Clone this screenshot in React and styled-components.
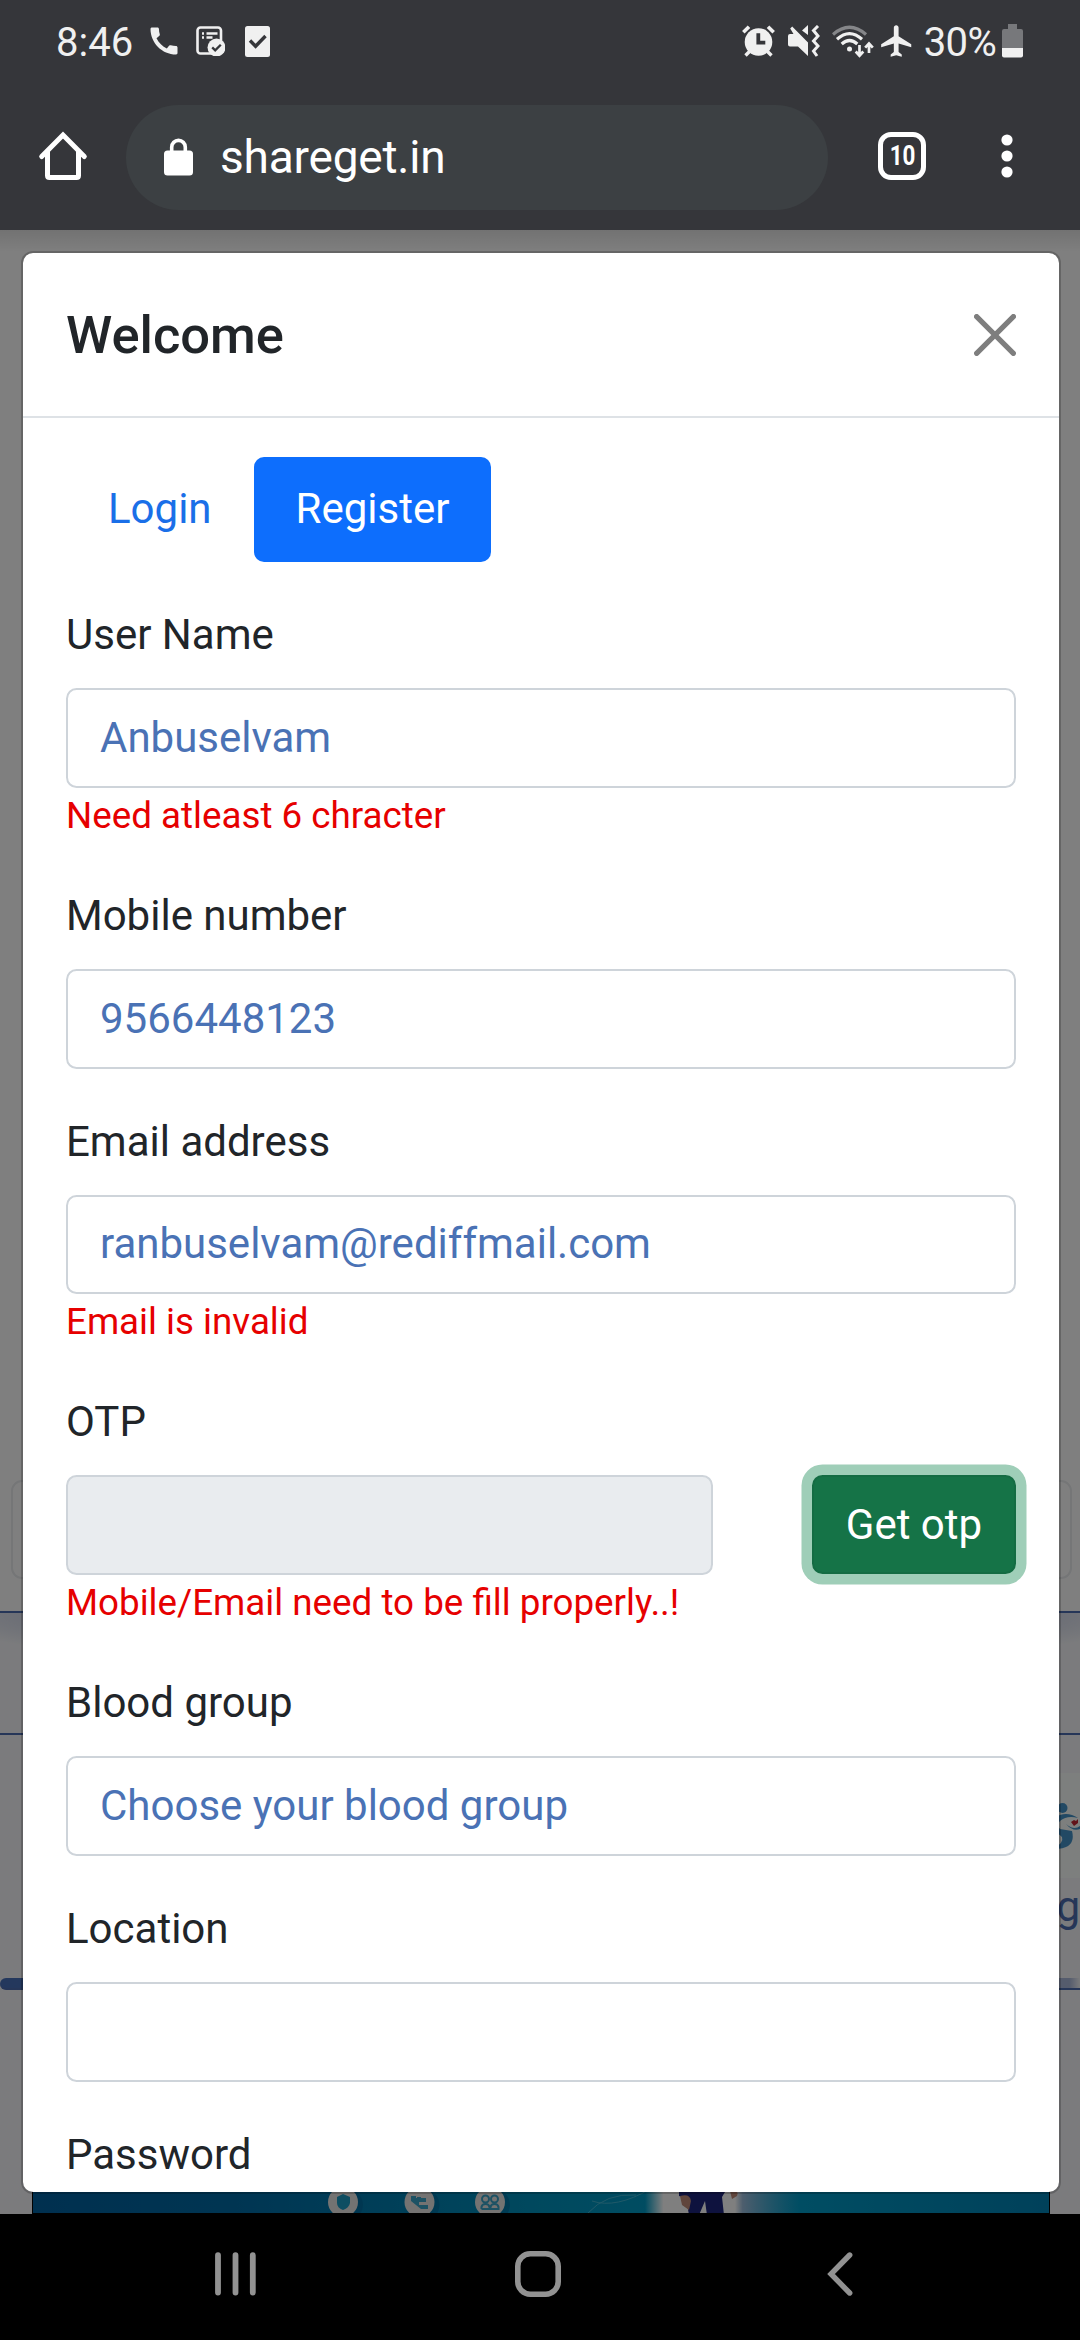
import React from "react";
import styled, { createGlobalStyle } from "styled-components";
import { MdCall, MdFlight } from "react-icons/md";

const GlobalStyle = createGlobalStyle`
  *, *::before, *::after { box-sizing: border-box; }
  html, body { margin: 0; padding: 0; background: #000; }
  body { font-family: Roboto, "Liberation Sans", sans-serif; line-height: 1.5; }
  svg { display: block; flex: none; }
`;

const Screen = styled.div`
  width: 1080px;
  height: 2340px;
  display: flex;
  flex-direction: column;
  overflow: hidden;
`;

/* Browser chrome */
const StatusBar = styled.header`
  height: 82px;
  flex: none;
  display: flex;
  align-items: center;
  justify-content: space-between;
  padding: 0 57px 0 56px;
  background: #35363a;
  color: #f0f0f0;
`;
const StatusGroup = styled.div`
  display: flex;
  align-items: center;
`;
const StatusText = styled.span`
  font-size: 40px;
  line-height: 82px;
  letter-spacing: ${(p) => p.$spacing || 0};
  padding-top: 3px;
`;
const Slot = styled.span`
  display: flex;
  margin-left: ${(p) => p.$left}px;
`;

const Toolbar = styled.div`
  height: 148px;
  flex: none;
  display: flex;
  align-items: center;
  padding: 0 67px 0 38px;
  background: #35363a;
  color: #fff;
`;
const ToolbarSpace = styled.div`
  flex: 1;
`;
const AddressPill = styled.div`
  width: 702px;
  height: 105px;
  margin: 2px 0 0 38px;
  padding-left: 38px;
  display: flex;
  align-items: center;
  border-radius: 53px;
  background: #3c4043;
`;
const Address = styled.span`
  margin-left: 27px;
  font-size: 46px;
  line-height: 60px;
  letter-spacing: -0.2px;
`;
const TabCount = styled.div`
  width: 48px;
  height: 48px;
  margin-left: 50px;
  border: 5px solid #fff;
  border-radius: 13px;
  display: flex;
  align-items: center;
  justify-content: center;
  padding-top: 1px;
  font-size: 27px;
  font-weight: 700;
  line-height: 1;
  span { transform: scaleX(0.83); }
`;

/* Web page under the dialog */
const Viewport = styled.main`
  position: relative;
  height: 1984px;
  flex: none;
  overflow: hidden;
  background: #fff;
`;
const Page = styled.div`
  height: 100%;
  display: flex;
  flex-direction: column;
  padding-top: 1250px;
`;
const SearchBox = styled.div`
  height: 99px;
  flex: none;
  margin: 0 8px 0 11px;
  border: 2px solid #eaecef;
  border-radius: 11px;
`;
const Section = styled.section`
  flex: 1;
  margin-top: 32px;
  background: #f6f7fa;
`;
const Strip = styled.div`
  height: 124px;
  border-top: 2px solid #4d6cb0;
  border-bottom: 2px solid #4d6cb0;
  background: radial-gradient(ellipse 620px 58px at 50% 0, #a9b6da 0%, #c2cae2 70%, rgba(246, 247, 250, 0) 100%);
`;
const Cards = styled.div`
  height: 255px;
  display: flex;
  flex-direction: column;
  align-items: flex-end;
  padding-top: 38px;
`;
const CardPicture = styled.div`
  width: 120px;
  height: 105px;
  display: flex;
  align-items: center;
  justify-content: flex-end;
  background: #fafffc;
`;
const CardName = styled.div`
  height: 100px;
  padding-top: 0;
  color: #4d6cb0;
  font-size: 42px;
  line-height: 58px;
`;
const Scroller = styled.div`
  width: 100%;
  height: 12px;
  border-bottom: 2px solid #4d6cb0;
  border-radius: 6px 0 0 6px;
  background: linear-gradient(90deg, #4970bb 0 50%, #aab8da 50% 99%, #f6f7fa);
`;
const Banner = styled.div`
  height: 170px;
  margin: 54px 30px 0 32px;
  border: 1px solid #000;
  display: flex;
  align-items: flex-start;
  background: linear-gradient(90deg, #00609f 0, #006ba5 20%, #0092bd 50%, #00a0ca 70%, #0082b5 100%);
`;
const Backdrop = styled.div`
  position: absolute;
  inset: 0;
  background: linear-gradient(rgba(0, 0, 0, 0.1), transparent 22px), rgba(0, 0, 0, 0.5);
  display: flex;
  padding: 21px 19px 20px 21px;
`;

/* Dialog */
const Dialog = styled.section`
  flex: 1;
  min-width: 0;
  border: 2px solid rgba(0, 0, 0, 0.2);
  border-radius: 12px;
  background: #fff;
  background-clip: padding-box;
  overflow: hidden;
  display: flex;
  flex-direction: column;
`;
const DialogHeader = styled.div`
  height: 165px;
  flex: none;
  display: flex;
  align-items: center;
  justify-content: space-between;
  padding: 0 43px 0 43px;
  border-bottom: 2px solid #dee2e6;
`;
const Title = styled.h5`
  margin: 0;
  padding-top: 1px;
  font-size: 52.5px;
  font-weight: 500;
  color: #212529;
`;
const DialogBody = styled.div`
  padding: 39px 43px 0 43px;
`;
const Tabs = styled.div`
  display: flex;
  margin-bottom: 42px;
`;
const Tab = styled.button`
  height: 105px;
  padding: 0 42px 2px;
  border: 0;
  border-radius: 10px;
  background: ${(p) => (p.$active ? "#0d6efd" : "transparent")};
  color: ${(p) => (p.$active ? "#fff" : "#1a6fe8")};
  font: 400 42px/63px Roboto, sans-serif;
`;
const Field = styled.div`
  margin-bottom: 42px;
`;
const Label = styled.label`
  display: block;
  height: 63px;
  margin-bottom: 21px;
  font-size: 42px;
  line-height: 61px;
  color: #212529;
`;
const Row = styled.div`
  display: flex;
  justify-content: space-between;
`;
const Control = styled.input`
  display: block;
  width: ${(p) => p.$width || "100%"};
  height: 99.75px;
  padding: 0 32px 1px;
  border: 2px solid #ced4da;
  border-radius: 10.5px;
  outline: 0;
  background: ${(p) => (p.disabled ? "#e9ecef" : "#fff")};
  color: #4a72b5;
  font: 400 42px/63px Roboto, sans-serif;
`;
const ErrorText = styled.div`
  height: 55.1px;
  font-size: 36.75px;
  line-height: 55.1px;
  color: #e60000;
`;
const OtpButton = styled.button`
  width: 204px;
  height: 99px;
  padding: 0;
  border: 2px solid #146c43;
  border-radius: 10.5px;
  background: #157347;
  box-shadow: 0 0 0 10.5px #9fceb8;
  color: #fff;
  font: 400 42px/63px Roboto, sans-serif;
`;

const NavBar = styled.nav`
  height: 126px;
  flex: none;
  display: flex;
  align-items: center;
  padding: 0 0 6px 215px;
  background: #000;
`;

const NoteIcon = () => (
  <svg width="29" height="30" viewBox="0 0 29 30">
    <rect x="1.5" y="1.5" width="23.5" height="26" rx="3" fill="none" stroke="currentColor" strokeWidth="2.6" />
    <path d="M6 7.5h2M10.5 7.5h11M6 11.5h2M10.5 11.5h6" stroke="currentColor" strokeWidth="2.4" />
    <circle cx="20.5" cy="21.5" r="9" fill="#f0f0f0" />
    <path d="M16.2 21.4l3 3 5.6-5.6" fill="none" stroke="#35363a" strokeWidth="2.3" />
  </svg>
);
const CheckIcon = () => (
  <svg width="25" height="31" viewBox="0 0 25 31">
    <rect width="25" height="31" rx="2.5" fill="currentColor" />
    <path d="M5 14.5l5.6 5.7L20.5 10" fill="none" stroke="#35363a" strokeWidth="3.4" />
  </svg>
);
const AlarmIcon = () => (
  <svg width="33" height="32" viewBox="0 0 33 32">
    <circle cx="16.5" cy="17" r="13.8" fill="currentColor" />
    <path d="M1.3 7.3L7 1.7M31.700 7.300L26 1.700" stroke="currentColor" strokeWidth="3.6" />
    <path d="M7.500 26.500L3.500 30.500M25.500 26.500L29.500 30.500" stroke="currentColor" strokeWidth="3.400" />
    <path d="M16.300 8.300V17.700H23.300" fill="none" stroke="#35363a" strokeWidth="3.800" />
  </svg>
);
const MuteIcon = () => (
  <svg width="32" height="32" viewBox="0 0 32 32" fill="currentColor">
    <path d="M0 11Q0 9 2 9H5.500L2.200 3.500L4.200 1.600L20 17.500V31L10 21.500H2Q0 21.500 0 19.500Z" />
    <path d="M20 0V10L14 5.500Z" />
    <path d="M30 1L25.500 5.500L30 11L25.500 16L30 21L25.500 26L29 31" fill="none" stroke="currentColor" strokeWidth="3" />
  </svg>
);
const WifiIcon = () => (
  <svg width="42" height="33" viewBox="0 0 42 33" fill="none" stroke="currentColor" strokeWidth="3.200">
    <path d="M1 9.500Q17.500-5 34 9.500" stroke="#858689" />
    <path d="M5 14.200Q17.500 3 30 14.200" />
    <path d="M9.700 19Q17.500 12 25.300 19" />
    <circle cx="17.500" cy="24" r="2.500" fill="currentColor" stroke="none" />
    <path d="M27.500 20V30M23.700 26.500L27.500 30.700L31.300 26.500M37 28V20M33.200 22.700L37 18.500L40.800 22.700" strokeWidth="2.700" />
  </svg>
);
const BatteryIcon = () => (
  <svg width="21" height="34" viewBox="0 0 21 34">
    <path d="M6 0H15V5H19Q21 5 21 7V25H0V7Q0 5 2 5H6Z" fill="#77787b" />
    <path d="M0 24H21V31.500Q21 33.500 19 33.500H2Q0 33.500 0 31.500Z" fill="#f0f0f0" />
  </svg>
);
const HomeIcon = () => (
  <svg width="50" height="50" viewBox="0 0 50 50" fill="none" stroke="#fff" strokeWidth="5" strokeLinecap="round">
    <path d="M3.700 25.500L25 4L46.300 25.500" strokeLinejoin="miter" />
    <path d="M9.500 20.500V44.500Q9.500 46.500 11.500 46.500H38.500Q40.500 46.500 40.500 44.500V20.500" />
  </svg>
);
const LockIcon = () => (
  <svg width="29" height="38" viewBox="0 0 29 38">
    <path d="M7.700 16V9.200a6.800 6.800 0 0 1 13.600 0V16" fill="none" stroke="#fff" strokeWidth="3.600" />
    <rect y="12.500" width="29" height="25" rx="3.500" fill="#fff" />
  </svg>
);
const MenuIcon = () => (
  <svg width="12" height="44" viewBox="0 0 12 44" fill="#fff">
    <circle cx="6" cy="6" r="5.600" />
    <circle cx="6" cy="22" r="5.600" />
    <circle cx="6" cy="38" r="5.600" />
  </svg>
);
const CloseIcon = () => (
  <svg width="42" height="42" viewBox="0 0 16 16" fill="#000" opacity="0.5">
    <path d="M.293.293a1 1 0 0 1 1.414 0L8 6.586 14.293.293a1 1 0 1 1 1.414 1.414L9.414 8l6.293 6.293a1 1 0 0 1-1.414 1.414L8 9.414l-6.293 6.293a1 1 0 0 1-1.414-1.414L6.586 8 .293 1.707a1 1 0 0 1 0-1.414z" />
  </svg>
);
const CareLogo = () => (
  <svg width="26" height="50" viewBox="0 0 26 50" fill="#4592c8">
    <circle cx="8.500" cy="7" r="5" />
    <path d="M0 17Q12 9 24 17Q13 14 6 20Q2 24 6 28L18 30Q21 42 12 46Q6 49 0 47Q10 42 8 36L0 29Z" />
    <path d="M12 23Q20 30 26 25V28Q19 31 12 23Z" />
    <path d="M20 25L17 21L20 19L22 20L24 18L24 22Z" fill="#c22735" />
  </svg>
);
const BannerArt = () => (
  <svg width="1016" height="168" viewBox="33 -148 1016 168">
    <defs>
      <linearGradient id="door">
        <stop offset="0" stopColor="#fff" stopOpacity="0" />
        <stop offset="0.120" stopColor="#fff" />
        <stop offset="0.580" stopColor="#fff" />
        <stop offset="0.630" stopColor="#9bbcdb" />
        <stop offset="1" stopColor="#6dacd2" stopOpacity="0" />
      </linearGradient>
    </defs>
    <path d="M588 20Q606 0 636 2M592 8Q616 16 650-4" fill="none" stroke="#40b3d2" strokeWidth="1" />
    <rect x="645" y="-30" width="155" height="52" fill="url(#door)" />
    <path d="M679-6H728L722 4L724 22H707L705 8L699 22H689L686 5L679 3Z" fill="#1c257c" />
    <path d="M680 3Q690 0 691 8L689 17L682 12ZM730-2Q740-3 737 3L732 6Z" fill="#c08a78" />
    {[343, 419.500, 490].map((cx) => (
      <React.Fragment key={cx}>
        <circle cx={cx + 4} cy="12" r="16" fill="#006397" opacity="0.500" />
        <circle cx={cx} cy="9" r="15" fill="#e8e6e4" />
      </React.Fragment>
    ))}
    <path d="M343 1L350 4V10Q349 15 343 17Q337 15 337 10V4Z" fill="#1c9cc4" />
    <path d="M411 3H416V5H426V9H419V12H428V16H421L411 8ZM417 4H421V7H417Z" fill="#3aa4c8" />
    <g fill="none" stroke="#3aa4c8" strokeWidth="2">
      <circle cx="485.500" cy="6" r="3.500" />
      <circle cx="494.500" cy="6" r="3.500" />
      <path d="M481.500 16V14Q482 11 485.500 11T489.500 14V16M490.500 16V14Q491 11 494.500 11T498.500 14V16H481.500" />
    </g>
  </svg>
);
const RecentsIcon = () => (
  <svg width="41" height="44" viewBox="0 0 41 44" stroke="#929292" strokeWidth="5.800" strokeLinecap="round">
    <path d="M3 3.200V40.500M20.500 3.200V40.500M37.800 3.200V40.500" />
  </svg>
);
const HomeNavIcon = () => (
  <svg width="46" height="46" viewBox="0 0 46 46">
    <rect x="2.800" y="2.800" width="40.400" height="40.400" rx="12.500" fill="none" stroke="#929292" strokeWidth="5.600" />
  </svg>
);
const BackIcon = () => (
  <svg width="26" height="44" viewBox="0 0 26 44" fill="none" stroke="#929292" strokeWidth="5.400" strokeLinecap="round">
    <path d="M22.700 3L4 22L22.700 41" />
  </svg>
);

const FormField = ({ label, value = "", error }) => (
  <Field>
    <Label>{label}</Label>
    <Control readOnly value={value} />
    {error && <ErrorText>{error}</ErrorText>}
  </Field>
);

export default function App() {
  return (
    <Screen>
      <GlobalStyle />
      <StatusBar>
        <StatusGroup>
          <StatusText>8:46</StatusText>
          <Slot $left={13}><MdCall size={36} /></Slot>
          <Slot $left={14}><NoteIcon /></Slot>
          <Slot $left={20}><CheckIcon /></Slot>
        </StatusGroup>
        <StatusGroup>
          <Slot $left={0}><AlarmIcon /></Slot>
          <Slot $left={13}><MuteIcon /></Slot>
          <Slot $left={12}><WifiIcon /></Slot>
          <Slot $left={4}><MdFlight size={38} /></Slot>
          <Slot $left={8}><StatusText $spacing="-0.7px">30%</StatusText></Slot>
          <Slot $left={6}><BatteryIcon /></Slot>
        </StatusGroup>
      </StatusBar>
      <Toolbar>
        <HomeIcon />
        <AddressPill>
          <LockIcon />
          <Address>shareget.in</Address>
        </AddressPill>
        <TabCount><span>10</span></TabCount>
        <ToolbarSpace />
        <Slot $left={0}><MenuIcon /></Slot>
      </Toolbar>

      <Viewport>
        <Page>
          <SearchBox />
          <Section>
            <Strip />
            <Cards>
              <CardPicture><CareLogo /></CardPicture>
              <CardName>g</CardName>
              <Scroller />
            </Cards>
            <Banner><BannerArt /></Banner>
          </Section>
        </Page>
        <Backdrop>
          <Dialog>
            <DialogHeader>
              <Title>Welcome</Title>
              <CloseIcon />
            </DialogHeader>
            <DialogBody>
              <Tabs>
                <Tab>Login</Tab>
                <Tab $active>Register</Tab>
              </Tabs>
              <FormField label="User Name" value="Anbuselvam" error="Need atleast 6 chracter" />
              <FormField label="Mobile number" value="9566448123" />
              <FormField label="Email address" value="ranbuselvam@rediffmail.com" error="Email is invalid" />
              <Field>
                <Label>OTP</Label>
                <Row>
                  <Control disabled $width="647px" />
                  <OtpButton>Get otp</OtpButton>
                </Row>
                <ErrorText>Mobile/Email need to be fill properly..!</ErrorText>
              </Field>
              <FormField label="Blood group" value="Choose your blood group" />
              <FormField label="Location" />
              <Label>Password</Label>
            </DialogBody>
          </Dialog>
        </Backdrop>
      </Viewport>

      <NavBar>
        <RecentsIcon />
        <Slot $left={258.5}><HomeNavIcon /></Slot>
        <Slot $left={266.5}><BackIcon /></Slot>
      </NavBar>
    </Screen>
  );
}
